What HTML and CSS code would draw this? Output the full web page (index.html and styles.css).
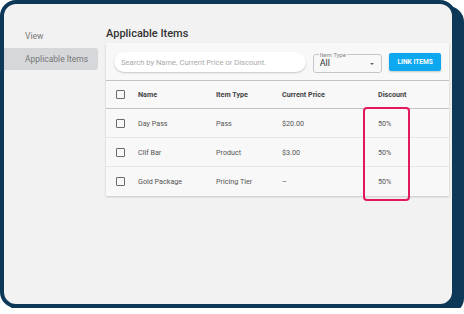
FILE: index.html
```html
<!DOCTYPE html>
<html lang="en">
<head>
  <meta charset="UTF-8">
  <meta name="viewport" content="width=device-width, initial-scale=1.0">
  <title>Applicable Items</title>
  <link rel="stylesheet" href="styles.css">
</head>
<body>
  <div class="frame">
    <nav class="sidebar">
      <a class="side-link">View</a>
      <a class="side-link active">Applicable Items</a>
    </nav>

    <main class="main">
      <h2 class="title">Applicable Items</h2>

      <div class="card">
        <div class="toolbar">
          <input class="search" type="text" placeholder="Search by Name, Current Price or Discount.">
          <fieldset class="select">
            <legend>Item Type</legend>
            <span class="select-value">All</span>
            <span class="caret"></span>
          </fieldset>
          <button class="btn">LINK ITEMS</button>
        </div>

        <div class="row head">
          <span class="check"></span>
          <span>Name</span>
          <span>Item Type</span>
          <span>Current Price</span>
          <span>Discount</span>
        </div>
        <div class="row">
          <span class="check"></span>
          <span>Day Pass</span>
          <span>Pass</span>
          <span>$20.00</span>
          <span>50%</span>
        </div>
        <div class="row">
          <span class="check"></span>
          <span>Clif Bar</span>
          <span>Product</span>
          <span>$3.00</span>
          <span>50%</span>
        </div>
        <div class="row last">
          <span class="check"></span>
          <span>Gold Package</span>
          <span>Pricing Tier</span>
          <span>&ndash;</span>
          <span>50%</span>
        </div>

        <div class="highlight"></div>
      </div>
    </main>
  </div>
</body>
</html>
```

FILE: styles.css
```css
:root {
  --navy: #0d3858;
  --panel: #f2f2f2;
  --text: #444;
}

body {
  margin: 0;
  background: #fff;
  font-family: Roboto, "Liberation Sans", sans-serif;
  color: var(--text);
}

.frame {
  width: 448px;
  height: 300px;
  border: 4px solid var(--navy);
  border-radius: 16px;
  box-shadow: 8px 6px 0 var(--navy);
  background: var(--panel);
  display: flex;
  overflow: hidden;
}

.sidebar {
  width: 94px;
  padding-top: 21px;
  display: flex;
  flex-direction: column;
  gap: 1px;
  flex-shrink: 0;
}

.side-link {
  height: 22px;
  line-height: 22px;
  padding-left: 21px;
  font-size: 8.5px;
  color: #777;
  border-radius: 0 3px 3px 0;
}

.side-link.active {
  background: #d5d7da;
}

.main {
  margin-left: 8px;
  flex: 1;
}

.title {
  margin: 0;
  height: 39px;
  line-height: 19px;
  padding-top: 20px;
  box-sizing: border-box;
  font-size: 11px;
  font-weight: 500;
  color: #333;
}

.card {
  position: relative;
  width: 343px;
  background: #f8f8f8;
  box-shadow: 0 1px 2px rgba(0, 0, 0, 0.18);
}

.toolbar {
  height: 37px;
  display: flex;
  align-items: center;
  padding: 0 8px;
  gap: 7px;
  border-bottom: 1.5px solid #c4c4c4;
}

.search {
  width: 193px;
  height: 20px;
  box-sizing: border-box;
  border: none;
  border-radius: 10px;
  background: #fff;
  box-shadow: 0 1px 2px rgba(0, 0, 0, 0.2);
  padding: 0 0 0 7px;
  font-family: inherit;
  font-size: 7.6px;
  margin-top: 1px;
}

.search::placeholder {
  color: #aaa;
}

.select {
  position: relative;
  width: 70px;
  height: 20px;
  box-sizing: border-box;
  margin: 2px 0 0;
  padding: 0 5px;
  border: 1px solid #c6c6c6;
  border-radius: 3px;
}

.select legend {
  font-size: 6px;
  color: #888;
  padding: 0 1px;
  line-height: 4px;
}

.select-value {
  position: absolute;
  left: 6px;
  top: 1px;
  font-size: 9px;
  color: #333;
}

.caret {
  position: absolute;
  right: 7px;
  top: 6px;
  border-left: 2.5px solid transparent;
  border-right: 2.5px solid transparent;
  border-top: 2.5px solid #666;
}

.btn {
  width: 52px;
  height: 18px;
  border: none;
  border-radius: 2px;
  background: #0ea8f0;
  color: #fff;
  font-family: inherit;
  font-size: 6.6px;
  font-weight: 700;
  padding: 0;
  margin-top: 1px;
  box-shadow: 0 1px 2px rgba(0, 0, 0, 0.2);
}

.row {
  display: grid;
  grid-template-columns: 22px 78px 66px 96px 1fr;
  align-items: center;
  height: 28px;
  padding-left: 10px;
  font-size: 7.2px;
  color: #555;
  border-bottom: 1px solid #e6e6e6;
}

.row.last {
  height: 29px;
  border-bottom: none;
}

.row.head {
  height: 27px;
  font-weight: 700;
  color: #444;
  border-bottom: 1.5px solid #c4c4c4;
}

.check {
  width: 7px;
  height: 7px;
  border: 1.3px solid #6a6a6a;
  border-radius: 1px;
}

.highlight {
  position: absolute;
  left: 257px;
  top: 64px;
  width: 43px;
  height: 90px;
  border: 2px solid #e2195c;
  border-radius: 4px;
}
```
